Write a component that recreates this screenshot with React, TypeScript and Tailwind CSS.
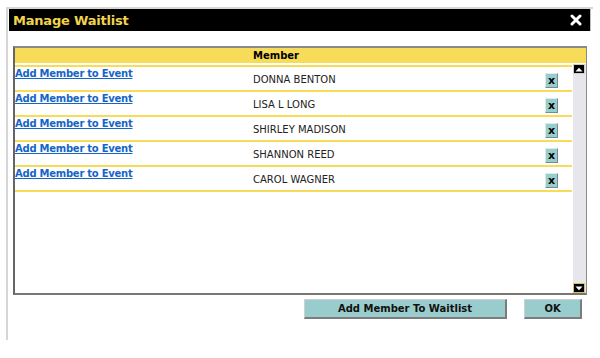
import React from "react";

const rows = ["DONNA BENTON", "LISA L LONG", "SHIRLEY MADISON", "SHANNON REED", "CAROL WAGNER"];

export default function App() {
  return (
    <div
      className="w-[600px] h-[358px] bg-white overflow-hidden pt-[7px] pl-[6px]"
      style={{ fontFamily: '"DejaVu Sans", Verdana, sans-serif' }}
    >
      <div className="w-[587px] h-[333px] border-l-2 border-t-2 border-[#d6d6d6] pl-[1px]">
        {/* Title bar */}
        <div className="w-[582px] h-[22px] bg-black border-r border-[#bdbdbd] flex items-center justify-between pl-[4px] pr-[8px]">
          <span className="text-[13px] font-bold text-[#f2d34c] leading-none tracking-[-0.2px]">Manage Waitlist</span>
          <svg width="12" height="12" viewBox="0 0 12 12">
            <path d="M2 2 L10 10 M10 2 L2 10" stroke="#ffffff" strokeWidth="3" strokeLinecap="round" />
          </svg>
        </div>

        {/* Grid */}
        <div className="ml-[4px] mt-[15px] w-[574px] h-[249px] border-t-2 border-l-2 border-b-2 border-r border-t-[#8a8a8a] border-l-[#666666] border-b-[#777777] border-r-[#8a8a8a] flex flex-col">
          <div className="h-[15px] bg-[#f6dc58] flex items-center shrink-0">
            <div className="w-[238px]" />
            <span className="text-[10px] font-bold text-black leading-none">Member</span>
          </div>
          <div className="flex-1 flex pt-[2px] min-h-0">
            <div className="flex-1 flex flex-col">
              <div className="h-[2px] bg-[#f6dc58] mr-[1px]" />
              {rows.map((name) => (
                <div key={name} className="h-[25px] border-b-2 border-[#f6dc58] flex mr-[1px]">
                  <div className="w-[238px] pt-[1px] text-[10px] leading-[12px]">
                    <a className="block font-bold text-[#1565c8] underline tracking-[-0.25px] cursor-pointer">
                      Add Member to Event
                    </a>
                  </div>
                  <div className="flex-1 pt-[7px] text-[10px] text-[#222222] leading-[12px]">{name}</div>
                  <div className="w-[13px] h-[15px] mt-[6px] mr-[14px] bg-[#99cccc] border-t border-l border-[#d9eded] border-b border-r border-b-[#7a8a8a] border-r-[#7a8a8a] flex items-center justify-center text-[11px] font-bold text-black leading-none">
                    x
                  </div>
                </div>
              ))}
            </div>
            {/* Scrollbar */}
            <div className="w-[13px] bg-[#e6e6ec] flex flex-col justify-between mt-[-1px]">
              <div className="w-[12px] h-[10px] bg-black border border-[#cfcfcf] flex items-center justify-center">
                <svg width="8" height="5" viewBox="0 0 8 5">
                  <path d="M0.5 4.5 L4 0.8 L7.5 4.5 Z" fill="#ffffff" />
                </svg>
              </div>
              <div className="w-[12px] h-[10px] bg-black border border-[#d8c060] flex items-center justify-center">
                <svg width="8" height="5" viewBox="0 0 8 5">
                  <path d="M0.5 0.5 L4 4.2 L7.5 0.5 Z" fill="#ffffff" />
                </svg>
              </div>
            </div>
          </div>
        </div>

        {/* Buttons */}
        <div className="w-[573px] flex justify-end gap-[17px] mt-[4px]">
          <button className="w-[203px] h-[20px] bg-[#99cccc] border-t border-l border-[#cfcfcf] border-b-2 border-r-2 border-b-[#7c7c7c] border-r-[#7c7c7c] text-[10px] font-bold text-[#111111] leading-none">
            Add Member To Waitlist
          </button>
          <button className="w-[58px] h-[20px] bg-[#99cccc] border-t border-l border-[#cfcfcf] border-b-2 border-r-2 border-b-[#7c7c7c] border-r-[#7c7c7c] text-[10px] font-bold text-[#111111] leading-none">
            OK
          </button>
        </div>
      </div>
    </div>
  );
}
